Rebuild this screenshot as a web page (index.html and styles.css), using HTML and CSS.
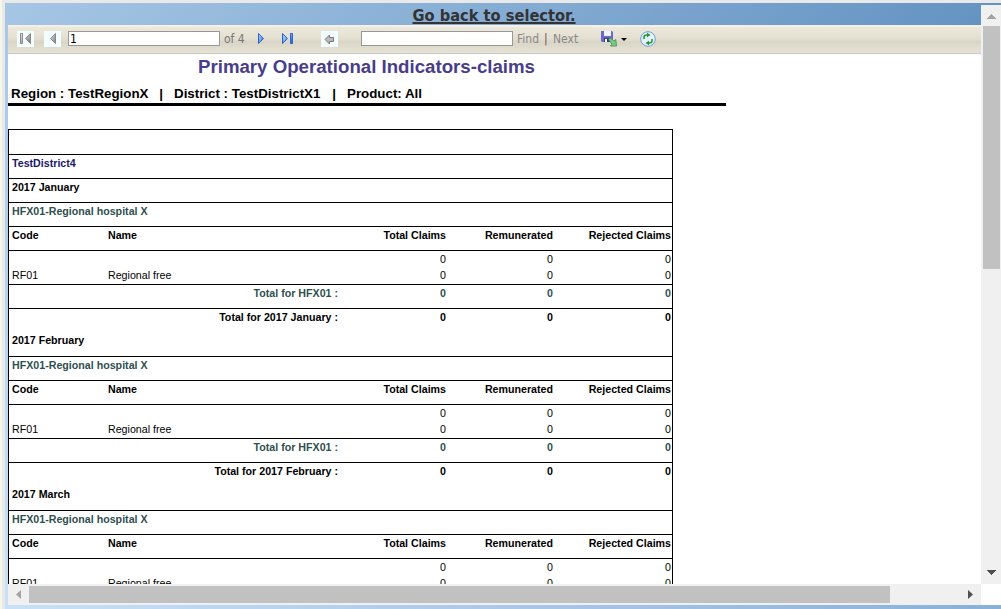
FILE: index.html
```html
<!DOCTYPE html>
<html lang="en">
<head>
<meta charset="utf-8">
<title>Primary Operational Indicators-claims</title>
<link rel="stylesheet" href="styles.css">
</head>
<body>
<div class="page">
  <header class="selector"><a class="selector-link">Go back to selector.</a></header>
  <div class="viewer">
    <main class="content">
      <div class="toolbar">
        <span class="tool-btn first"><svg width="17" height="16" viewBox="0 0 17 16"><defs><linearGradient id="g" x2="1" y2="1"><stop stop-color="#eee"/><stop offset="1" stop-color="#777"/></linearGradient><linearGradient id="b" x2="1" y2="1"><stop stop-color="#c4e2ff"/><stop offset="1" stop-color="#1f62dd"/></linearGradient></defs><path d="M3.500 2.500h2v10h-2zM13.500 2.500v10l-5-5z" fill="url(#g)" stroke="#888"/></svg></span>
        <span class="tool-btn prev"><svg width="17" height="16" viewBox="0 0 17 16"><path d="M11.500 2.500v10l-5-5z" fill="url(#g)" stroke="#888"/></svg></span>
        <span class="field page-field">1</span>
        <span class="tool-text of">of 4</span>
        <svg class="next-icon" width="17" height="16" viewBox="0 0 17 16"><path d="M6.500 2.500v10l5-5z" fill="url(#b)" stroke="#2b62cf"/></svg>
        <svg class="last-icon" width="17" height="16" viewBox="0 0 17 16"><path d="M4.500 2.500v10l5-5zM12.500 2.500h2v10h-2z" fill="url(#b)" stroke="#2b62cf"/></svg>
        <span class="tool-btn back"><svg width="17" height="16" viewBox="0 0 17 16"><path d="M4 8.500l4.500-4.500v2.500h4v4h-4v2.500z" fill="#bbb" stroke="#777"/></svg></span>
        <span class="field find-field"></span>
        <span class="tool-text find">Find</span><span class="tool-text bar">|</span><span class="tool-text next">Next</span>
        <svg class="export" width="28" height="18" viewBox="0 0 28 18"><path d="M1 2h11l1 1v10H2l-1-1z" fill="#6a68cf"/><path d="M4 2h7v5H4z" fill="#eef3ff"/><path d="M4 9h7v4H4z" fill="#333c77"/><path d="M5 10h2v3H5z" fill="#fff"/><path d="M8.500 10.500l2-1.500 3.500 3 1.800-1.500.7 6.500h-6l1.500-1.800z" fill="#7cc985" stroke="#3a8f49" stroke-width=".8"/><path d="M21 9h6l-3 3z" fill="#000"/></svg>
        <svg class="refresh" width="16" height="16" viewBox="0 0 16 16"><circle cx="8" cy="8" r="7.300" fill="#e2f0ff" stroke="#6d9fd2"/><path d="M4 8V6q0-2 3-2M12 8v2q0 2-3 2" fill="none" stroke="#229325" stroke-width="1.500"/><path d="M7 1.800L10.500 4 7 6.300zM9 9.700v4.600L5.500 12z" fill="#229325"/></svg>
      </div>
      <div class="report">
        <h1 class="title">Primary Operational Indicators-claims</h1>
        <div class="filters"><span class="region">Region : TestRegionX</span><span class="sep">|</span><span class="district">District : TestDistrictX1</span><span class="sep">|</span><span>Product: All</span></div>
        <div class="table">
          <div class="row blank"></div>
          <div class="row navy"><span>TestDistrict4</span></div>
          <div class="row"><span>2017 January</span></div>
          <div class="row slate"><span>HFX01-Regional hospital X</span></div>
          <div class="row cols"><span>Code</span><span>Name</span><span class="num">Total Claims</span><span class="num">Remunerated</span><span class="num">Rejected Claims</span></div>
          <div class="row cols detail"><span></span><span></span><span class="num">0</span><span class="num">0</span><span class="num">0</span></div>
          <div class="row cols detail end"><span>RF01</span><span>Regional free</span><span class="num">0</span><span class="num">0</span><span class="num">0</span></div>
          <div class="row sums slate"><span class="num">Total for HFX01 :</span><span class="num">0</span><span class="num">0</span><span class="num">0</span></div>
          <div class="row sums open"><span class="num">Total for 2017 January :</span><span class="num">0</span><span class="num">0</span><span class="num">0</span></div>
          <div class="row month"><span>2017 February</span></div>
          <div class="row slate"><span>HFX01-Regional hospital X</span></div>
          <div class="row cols"><span>Code</span><span>Name</span><span class="num">Total Claims</span><span class="num">Remunerated</span><span class="num">Rejected Claims</span></div>
          <div class="row cols detail"><span></span><span></span><span class="num">0</span><span class="num">0</span><span class="num">0</span></div>
          <div class="row cols detail end"><span>RF01</span><span>Regional free</span><span class="num">0</span><span class="num">0</span><span class="num">0</span></div>
          <div class="row sums slate"><span class="num">Total for HFX01 :</span><span class="num">0</span><span class="num">0</span><span class="num">0</span></div>
          <div class="row sums open"><span class="num">Total for 2017 February :</span><span class="num">0</span><span class="num">0</span><span class="num">0</span></div>
          <div class="row month"><span>2017 March</span></div>
          <div class="row slate"><span>HFX01-Regional hospital X</span></div>
          <div class="row cols"><span>Code</span><span>Name</span><span class="num">Total Claims</span><span class="num">Remunerated</span><span class="num">Rejected Claims</span></div>
          <div class="row cols detail"><span></span><span></span><span class="num">0</span><span class="num">0</span><span class="num">0</span></div>
          <div class="row cols detail end"><span>RF01</span><span>Regional free</span><span class="num">0</span><span class="num">0</span><span class="num">0</span></div>
        </div>
      </div>
    </main>
    <div class="vscroll"><svg width="20" height="21"><path d="M10 9h1v1h1v1h1v1h1v1h1v1H6v-1h1v-1h1v-1h1v-1h1z" fill="#a3a3a3"/></svg><div class="vthumb"></div><svg class="down" width="20" height="17"><path d="M6 3h9v1h-1v1h-1v1h-1v1h-1v1h-1V7H9V6H8V5H7V4H6z" fill="#505050"/></svg></div>
    <div class="hscroll"><svg width="21" height="21"><path d="M13 6v9l-5-4.500z" fill="#a3a3a3"/></svg><div class="hthumb"></div><svg class="right" width="21" height="21"><path d="M8 6v9l5-4.500z" fill="#505050"/></svg></div>
    <div class="corner"></div>
  </div>
</div>
</body>
</html>
```
FILE: styles.css
```css
* { box-sizing: border-box; }
body { margin: 0; width: 1001px; height: 609px; overflow: hidden; background: #f5f7e9; padding-left: 2px; font-family: "Liberation Sans", Arial, sans-serif; }
svg { display: block; flex: none; }
.page { height: 609px; border-left: 3px solid #e9e9e9; border-top: 3px solid #e9e9e9; padding-left: 3px; background: linear-gradient(135deg, #a6c6e5, #6392c2) top / 100% 22px no-repeat, linear-gradient(to right, #c8e1f6, #8ab0d8) bottom / 100% 4px no-repeat, linear-gradient(#a6c6e5, #c8e1f6); }
.selector { height: 22px; display: flex; justify-content: center; padding-right: 20px; }
.selector-link { font: bold 16.3px/26px "DejaVu Sans Condensed", "Noto Sans", sans-serif; width: 164px; white-space: nowrap; color: #333; text-decoration: underline; text-decoration-thickness: 2px; text-underline-offset: 1px; }
.viewer { display: grid; grid-template-columns: 973px 20px; grid-template-rows: 559px 21px; }
.content { overflow: hidden; background: #fff; }
.toolbar { height: 29px; border-top: 2px solid #f5f0e5; border-bottom: 1px solid #c9c9c9; background: linear-gradient(#ece9dc, #e3dfd0 45%, #d8d5c7 57%, #e7e3d4); display: flex; align-items: flex-start; padding-top: 4px; }
.tool-btn { width: 17px; height: 16px; background: #f2fefd; }
.first { margin-left: 9px; }
.prev { margin-left: 10px; }
.field { width: 152px; height: 15px; border: 1px solid #989898; background: #fff; }
.page-field { margin-left: 7px; padding-left: 1px; font: 12px/15px "DejaVu Sans Condensed", sans-serif; }
.tool-text { font: 12px/17px "DejaVu Sans Condensed", sans-serif; color: #777; flex: none; white-space: nowrap; }
.of { width: 22px; margin-left: 4px; }
.next-icon { margin-left: 6px; }
.last-icon { margin-left: 9px; }
.back { margin-left: 26px; }
.find-field { margin-left: 23px; }
.find { width: 23px; margin-left: 4px; color: #888; }
.bar { width: 5px; margin-left: 4px; color: #754954; }
.next { width: 26px; margin-left: 4px; color: #888; }
.export { margin-left: 21px; margin-top: -2px; }
.refresh { margin-left: 12px; }
.title { margin: 0; height: 30px; padding: 1px 0 0 190px; font-size: 18.67px; line-height: 23px; color: #483d8b; white-space: nowrap; }
.filters { width: 718px; height: 22px; border-bottom: 3px solid #000; padding-left: 3px; display: flex; font-size: 13.33px; font-weight: bold; line-height: 20px; white-space: nowrap; }
.sep { width: 26px; text-align: center; }
.region { width: 137px; }
.district { width: 147px; }
.table { width: 665px; margin-top: 23px; border: 1px solid #000; border-bottom: 0; }
.row { height: 24px; border-bottom: 1px solid #000; padding-left: 3px; display: flex; font-weight: bold; font-size: 10.67px; line-height: 17px; white-space: nowrap; }
.blank { height: 25px; }
.navy { color: #191970; }
.slate { color: #2f4f4f; }
.cols { display: grid; grid-template-columns: 96px 230px 108px 107px 118px; }
.sums { display: grid; grid-template-columns: 326px 108px 107px 118px; }
.num { text-align: right; }
.detail { height: 16px; font-weight: normal; border-bottom-color: transparent; }
.end { height: 18px; border-bottom-color: #000; }
.open { border-bottom-color: transparent; }
.month { line-height: 15px; }
.vscroll { background: #f0f0f0; margin-top: -20px; }
.vthumb { width: 17px; height: 243px; margin-left: 2px; background: #c1c1c1; }
.down { margin-top: 298px; }
.hscroll { background: #f0f0f0; display: flex; }
.hthumb { width: 861px; height: 17px; margin-top: 2px; background: #c1c1c1; }
.right { margin-left: 70px; }
.corner { background: #fff; }
```
